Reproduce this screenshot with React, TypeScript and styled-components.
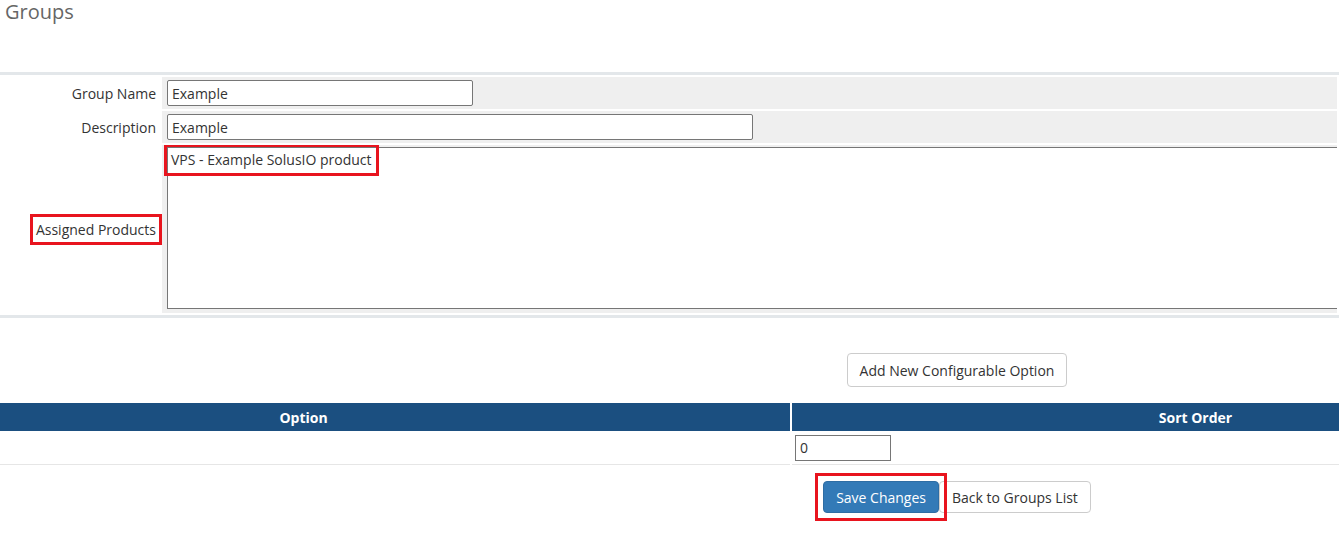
import styled, { createGlobalStyle } from 'styled-components';

const GlobalStyle = createGlobalStyle`
  body {
    margin: 0;
    font-family: 'Open Sans', 'Liberation Sans', sans-serif;
    font-size: 14px;
    color: #333;
    background: #fff;
    overflow: hidden;
  }
`;

const Page = styled.div`
  width: 1339px;
  padding-bottom: 20px;
  overflow: hidden;
`;

const Title = styled.h1`
  margin: 0 0 48px;
  padding: 0 5px;
  font-size: 20px;
  line-height: 24px;
  font-weight: 400;
  color: #666;
`;

const FormTable = styled.table`
  width: 100%;
  table-layout: fixed;
  border-collapse: separate;
  border-spacing: 2px;
  border-top: 3px solid #e3e7ea;
  border-bottom: 3px solid #e3e7ea;
`;

const LabelCell = styled.td`
  width: 154px;
  padding: 0 4px 0 0;
  text-align: right;
  white-space: nowrap;
  vertical-align: middle;
`;

const FieldCell = styled.td<{ $tall?: boolean }>`
  background: #efefef;
  padding: ${({ $tall }) => ($tall ? '2px 0 4px 5px' : '3px 0 3px 5px')};
  overflow: hidden;
  white-space: nowrap;
`;

const TextInput = styled.input<{ $w: number }>`
  box-sizing: border-box;
  width: ${({ $w }) => $w}px;
  height: 26px;
  margin: 0;
  padding: 0 4px;
  border: 1px solid #767676;
  border-radius: 2px;
  font: inherit;
  color: #333;
  background: #fff;
  display: block;
`;

const ListBox = styled.div`
  box-sizing: border-box;
  width: 1220px;
  height: 162px;
  border: 1px solid #767676;
  background: #fff;
  padding: 2px 0 0 2px;
`;

const ListOption = styled.div`
  display: inline-block;
  line-height: 20px;
  padding: 0 1px;
`;

// red callout frame around the parts being pointed out
const Marked = styled.span<{ $gap: number }>`
  position: relative;
  z-index: 1;
  display: inline-flex;
  outline: 3px solid #e8141e;
  outline-offset: ${({ $gap }) => $gap}px;
`;

const ActionBar = styled.div<{ $top: number }>`
  display: flex;
  justify-content: center;
  align-items: center;
  padding-left: 575px;
  margin-top: ${({ $top }) => $top}px;
`;

const Button = styled.button<{ $primary?: boolean }>`
  height: 34px;
  padding: 0 12px;
  font: inherit;
  border-radius: 4px;
  border: 1px solid ${({ $primary }) => ($primary ? '#2e6da4' : '#ccc')};
  background: ${({ $primary }) => ($primary ? '#337ab7' : '#fff')};
  color: ${({ $primary }) => ($primary ? '#fff' : '#333')};
  cursor: pointer;
`;

const SmallButton = styled(Button)`
  height: 32px;
`;

const OptionsTable = styled.table`
  width: 100%;
  margin-top: 16px;
  border-collapse: collapse;
  table-layout: fixed;
`;

const HeadCell = styled.th<{ $padL?: number; $padR?: number }>`
  box-sizing: border-box;
  height: 28px;
  padding: 0 ${({ $padR }) => $padR ?? 0}px 0 ${({ $padL }) => $padL ?? 0}px;
  background: #1b4f80;
  color: #fff;
  font-weight: 700;
  text-align: center;
  &:first-child {
    width: 791px;
    border-right: 2px solid #fff;
  }
`;

const BodyCell = styled.td`
  height: 33px;
  padding: 0 3px;
  border-bottom: 1px solid #e6e6e6;
  &:first-child {
    border-right: 2px solid #fff;
  }
`;

const SortInput = styled(TextInput)`
  border-radius: 0;
`;

export default function App() {
  return (
    <Page>
      <GlobalStyle />
      <Title>Groups</Title>

      <FormTable>
        <tbody>
          <tr>
            <LabelCell>Group Name</LabelCell>
            <FieldCell>
              <TextInput $w={306} defaultValue="Example" />
            </FieldCell>
          </tr>
          <tr>
            <LabelCell>Description</LabelCell>
            <FieldCell>
              <TextInput $w={586} defaultValue="Example" />
            </FieldCell>
          </tr>
          <tr>
            <LabelCell>
              <Marked $gap={3}>Assigned Products</Marked>
            </LabelCell>
            <FieldCell $tall>
              <ListBox>
                <Marked $gap={3}>
                  <ListOption>VPS - Example SolusIO product</ListOption>
                </Marked>
              </ListBox>
            </FieldCell>
          </tr>
        </tbody>
      </FormTable>

      <ActionBar $top={35}>
        <Button>Add New Configurable Option</Button>
      </ActionBar>

      <OptionsTable>
        <thead>
          <tr>
            <HeadCell $padR={183}>Option</HeadCell>
            <HeadCell $padL={260}>Sort Order</HeadCell>
          </tr>
        </thead>
        <tbody>
          <tr>
            <BodyCell />
            <BodyCell>
              <SortInput $w={96} defaultValue="0" />
            </BodyCell>
          </tr>
        </tbody>
      </OptionsTable>

      <ActionBar $top={16}>
        <Marked $gap={5}>
          <SmallButton $primary>Save Changes</SmallButton>
        </Marked>
        <SmallButton>Back to Groups List</SmallButton>
      </ActionBar>
    </Page>
  );
}
